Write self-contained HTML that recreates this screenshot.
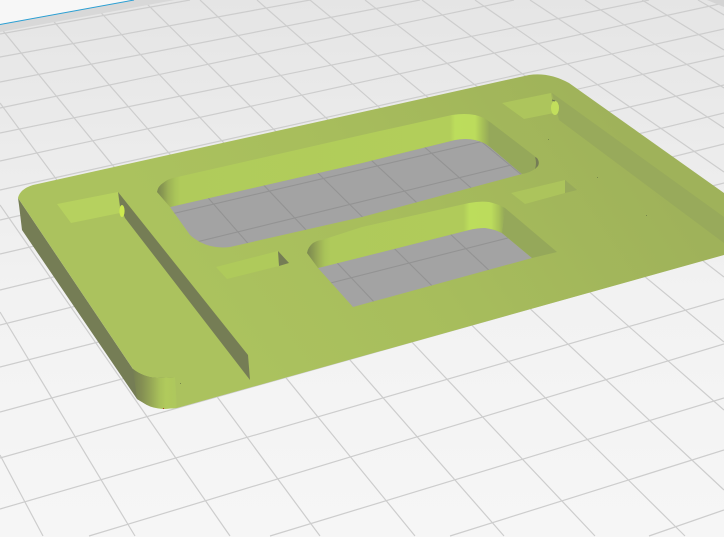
<!DOCTYPE html>
<html><head><meta charset="utf-8"><style>
html,body{margin:0;padding:0;background:#f5f5f5;width:724px;height:537px;overflow:hidden}
svg{display:block;overflow:hidden}
</style></head><body>
<svg width="724" height="537" viewBox="0 0 724 537" xmlns="http://www.w3.org/2000/svg">
<defs>
<linearGradient id="bed" x1="0" y1="0" x2="0" y2="537" gradientUnits="userSpaceOnUse">
<stop offset="0" stop-color="#e5e5e5"/><stop offset=".25" stop-color="#ebebeb"/><stop offset=".55" stop-color="#f2f2f2"/><stop offset="1" stop-color="#f6f6f6"/>
</linearGradient>
<linearGradient id="top" x1="600" y1="90" x2="230" y2="340" gradientUnits="userSpaceOnUse">
<stop offset="0" stop-color="#9fb25a"/><stop offset=".55" stop-color="#a7bd5c"/><stop offset="1" stop-color="#abc25e"/>
</linearGradient>
<linearGradient id="w1" x1="157" y1="0" x2="490" y2="0" gradientUnits="userSpaceOnUse">
<stop offset="0" stop-color="#7b8850"/><stop offset=".018" stop-color="#8a9a52"/><stop offset=".033" stop-color="#9cb056"/><stop offset=".054" stop-color="#a9c359"/><stop offset=".07" stop-color="#b0cb5b"/>
<stop offset=".88" stop-color="#b2ce5a"/><stop offset=".895" stop-color="#bcdd5c"/><stop offset=".955" stop-color="#bcdc5c"/><stop offset=".976" stop-color="#a8c258"/><stop offset="1" stop-color="#93a659"/>
</linearGradient>
<linearGradient id="w2" x1="307" y1="0" x2="505" y2="0" gradientUnits="userSpaceOnUse">
<stop offset="0" stop-color="#7b8850"/><stop offset=".03" stop-color="#8a9a52"/><stop offset=".06" stop-color="#9cb056"/><stop offset=".09" stop-color="#a9c359"/><stop offset=".12" stop-color="#afca5b"/>
<stop offset=".79" stop-color="#b0cb5a"/><stop offset=".82" stop-color="#bcdd5c"/><stop offset=".93" stop-color="#bcdc5c"/><stop offset=".97" stop-color="#a8c258"/><stop offset="1" stop-color="#93a659"/>
</linearGradient>
<linearGradient id="c" x1="133" y1="0" x2="177" y2="0" gradientUnits="userSpaceOnUse">
<stop offset="0" stop-color="#768052"/><stop offset=".2" stop-color="#848f53"/><stop offset=".4" stop-color="#95a656"/><stop offset=".6" stop-color="#a8c05a"/><stop offset=".75" stop-color="#b0ca5c"/><stop offset=".98" stop-color="#aec75d"/><stop offset="1" stop-color="#abc25e"/>
</linearGradient>
<clipPath id="f"><path d="M170,207 L362,163 L455,140 Q466,138 475,140 Q484,142 490,147 L522,174 L362,217 L230,247 Q213,249 200,242 Q193,238 190,235 Z M318,268 L362,257 L469,230 Q477,228 485,228 Q494,229 502,233 L532,258 L353,307 Z"/></clipPath>
<g id="g" fill="none">
<path d="M0,34L190,0M0,57L310,0M0,82L420,0M0,108L514,0M0,133L649,0M0,161L724,3M0,190L724,29M0,220L724,56M0,254L724,85M0,290L724,113M0,325L724,144M0,367L724,183M0,412L724,216M0,458L724,254M0,509L724,299M89,536L724,344M270,536L724,398M450,536L724,450M649,536L724,510"/>
<path d="M0,455L43,536M0,312L135,536M0,205L230,536M0,103L320,536M0,27L415,536M35,0L504,536M89,0L595,536M143,0L685,536M200,0L724,490M257,0L724,410M310,0L724,342M365,0L724,277M422,0L724,222M475,0L724,172M530,0L724,128M585,0L724,88M642,0L724,50M698,0L724,15"/>
</g>
</defs>

<rect width="724" height="537" fill="url(#bed)"/>
<use href="#g" stroke="#cdcdcd" stroke-width="1.2"/>

<!-- top-left bed edge -->
<path d="M0,25 L134,0 L175,0 L0,32 Z" fill="#d8d8d8"/>
<path d="M0,0 L134,0 L0,24 Z" fill="#f7f7f7"/>
<path d="M0,24.5 L134,0" stroke="#2b9fd3" stroke-width="1" fill="none"/>
<path d="M707,0 L724,0 L724,7 Z" fill="#d4d4d4"/>

<!-- plate side wall -->
<path d="M18,198 L19,205 L22,230 L137,399 L147,405 L177,408 L177,377 L133,369 Z" fill="#757d55"/>
<!-- plate top -->
<path d="M18,198 Q20,189 33,185 L529,75 Q549,72 569,83 L724,193 L724,255 L177,408 L163,409 L175,377 L157,378 Q143,377 133,369 Z" fill="url(#top)"/>
<!-- rounded corner -->
<path d="M133,369 Q143,377 157,378 L175,377 L177,408 L163,409 Q152,408 147,405 L137,399 Z" fill="url(#c)"/>

<!-- long grooves -->
<path d="M118,192 L248,355 L250,380 L125,218 L120,206 Z" fill="#757d55"/>
<path d="M552,93 L724,217 L724,243 L559,120 Z" fill="#98aa5b"/>

<!-- pockets -->
<path d="M57,204 L118,192 L120,213 L71,223 Z" fill="#b6d15f"/>
<ellipse cx="122" cy="211" rx="2.6" ry="6" fill="#cdea4f"/>
<path d="M502,103 L551,93 L554,113 L524,119 Z" fill="#adc55c"/>
<ellipse cx="555" cy="108" rx="4" ry="7" fill="#c2de5c"/>
<path d="M552,100 l3,1" stroke="#6b7550" stroke-width="1"/>
<path d="M216,267 L278,251 L279,266 L227,279 Z" fill="#afca5b"/>
<path d="M278,251 L289,263 L279,266 Z" fill="#757d55"/>
<path d="M511,193 L565,180 L565,193 L525,204 Z" fill="#acc45c"/>
<path d="M565,180 L577,190 L565,193 Z" fill="#98aa5b"/>

<!-- through holes: floor -->
<g>
<path d="M170,207 L362,163 L455,140 Q466,138 475,140 Q484,142 490,147 L522,174 L362,217 L230,247 Q213,249 200,242 Q193,238 190,235 Z" fill="#a3a3a3"/>
<path d="M318,268 L362,257 L469,230 Q477,228 485,228 Q494,229 502,233 L532,258 L353,307 Z" fill="#a3a3a3"/>
<g clip-path="url(#f)"><use href="#g" stroke="#939393" stroke-width="1.1"/></g>
</g>

<!-- hole 1 walls -->
<path d="M157,192 Q158,186 163,183 Q168,179 173,178 L362,135 L452,115 Q465,113 475,115 Q484,117 490,122 L490,147 Q484,142 475,140 Q466,138 455,140 L362,163 L170,207 Z" fill="url(#w1)"/>
<path d="M490,122 L537,158 Q540,162 538,166 Q533,172 522,174 L490,147 Z" fill="#95a85a"/>
<path d="M537,158 Q540,162 538,166 L535,169 Q537,163 535,157 Z" fill="#757d55"/>

<!-- hole 2 walls -->
<path d="M307,253 Q308,247 313,243 Q318,240 322,240 L362,227 L469,203 Q480,201 489,202 Q498,204 505,208 L502,233 Q494,229 485,228 Q477,228 469,230 L362,257 L318,268 Z" fill="url(#w2)"/>
<path d="M505,208 L557,252 L532,258 L502,233 Z" fill="#95a85a"/>

<!-- specks -->
<rect x="163" y="408" width="1" height="1" fill="#b3362a"/>
<rect x="180" y="383" width="1" height="1" fill="#7a8a4a"/>
<rect x="548" y="139" width="1" height="1" fill="#7a8a4a"/>
<rect x="597" y="177" width="1" height="1" fill="#7a8a4a"/>
<rect x="646" y="215" width="1" height="1" fill="#7a8a4a"/>
</svg>
</body></html>
